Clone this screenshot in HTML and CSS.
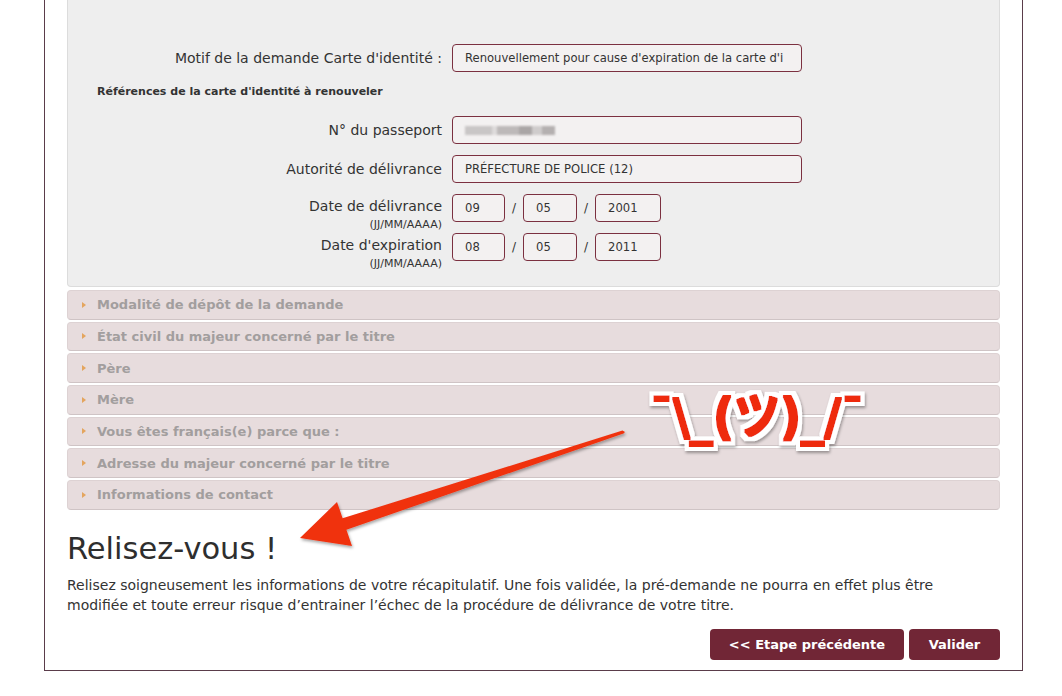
FILE: index.html
```html
<!DOCTYPE html>
<html lang="fr">
<head>
<meta charset="utf-8">
<title>Récapitulatif</title>
<link rel="stylesheet" href="styles.css">
</head>
<body>
<div class="page">
  <div class="panel">
    <div class="field-row">
      <div class="label">Motif de la demande Carte d'identité :</div>
      <div class="input input-wide">Renouvellement pour cause d'expiration de la carte d'i</div>
    </div>
    <div class="subhead">Références de la carte d'identité à renouveler</div>
    <div class="field-row">
      <div class="label">N° du passeport</div>
      <div class="input input-wide"><span class="blur"></span></div>
    </div>
    <div class="field-row">
      <div class="label">Autorité de délivrance</div>
      <div class="input input-wide">PRÉFECTURE DE POLICE (12)</div>
    </div>
    <div class="field-row">
      <div class="label label-date">Date de délivrance<span class="hint">(JJ/MM/AAAA)</span></div>
      <div class="date">
        <div class="input input-dd">09</div><span class="sep">/</span>
        <div class="input input-mm">05</div><span class="sep">/</span>
        <div class="input input-yy">2001</div>
      </div>
    </div>
    <div class="field-row">
      <div class="label label-date">Date d'expiration<span class="hint">(JJ/MM/AAAA)</span></div>
      <div class="date">
        <div class="input input-dd">08</div><span class="sep">/</span>
        <div class="input input-mm">05</div><span class="sep">/</span>
        <div class="input input-yy">2011</div>
      </div>
    </div>
  </div>

  <div class="accordion">
    <div class="acc-item"><span class="caret"></span>Modalité de dépôt de la demande</div>
    <div class="acc-item"><span class="caret"></span>État civil du majeur concerné par le titre</div>
    <div class="acc-item"><span class="caret"></span>Père</div>
    <div class="acc-item"><span class="caret"></span>Mère</div>
    <div class="acc-item"><span class="caret"></span>Vous êtes français(e) parce que :</div>
    <div class="acc-item"><span class="caret"></span>Adresse du majeur concerné par le titre</div>
    <div class="acc-item"><span class="caret"></span>Informations de contact</div>
  </div>

  <h2 class="title">Relisez-vous !</h2>
  <p class="intro">Relisez soigneusement les informations de votre récapitulatif. Une fois validée, la pré-demande ne pourra en effet plus être modifiée et toute erreur risque d’entrainer l’échec de la procédure de délivrance de votre titre.</p>

  <div class="actions">
    <button class="btn btn-prev">&lt;&lt; Etape précédente</button>
    <button class="btn btn-ok">Valider</button>
  </div>
</div>

<svg class="annot" width="1062" height="696" viewBox="0 0 1062 696">
  <defs>
    <filter id="sh" x="-10%" y="-10%" width="130%" height="140%">
      <feDropShadow dx="1" dy="2" stdDeviation="1.5" flood-color="#000" flood-opacity="0.35"/>
    </filter>
    <filter id="sticker" x="-8%" y="-30%" width="120%" height="170%">
      <feMorphology in="SourceAlpha" operator="dilate" radius="5" result="outer"/>
      <feFlood flood-color="#ffffff" result="wfill"/>
      <feComposite in="wfill" in2="outer" operator="in" result="white"/>
      <feGaussianBlur in="outer" stdDeviation="1.6" result="blur"/>
      <feOffset in="blur" dx="1" dy="2" result="offb"/>
      <feFlood flood-color="#000000" flood-opacity="0.35" result="sfill"/>
      <feComposite in="sfill" in2="offb" operator="in" result="shadow"/>
      <feMorphology in="SourceGraphic" operator="dilate" radius="0.8" result="thick"/>
      <feMerge>
        <feMergeNode in="shadow"/>
        <feMergeNode in="white"/>
        <feMergeNode in="thick"/>
      </feMerge>
    </filter>
  </defs>
  <polygon class="arrow" filter="url(#sh)" points="622.5,430.6 342.6,518.3 337,502 300,538 352,546 346.4,529.7 623.5,433.4 625,432"/>
  <text class="shrug" x="650" y="434" textLength="214" lengthAdjust="spacingAndGlyphs" filter="url(#sticker)">¯\_(ツ)_/¯</text>
</svg>
</body>
</html>
```

FILE: styles.css
```css
html, body {
  margin: 0;
  padding: 0;
  background: #ffffff;
}

body {
  position: relative;
  width: 1062px;
  height: 696px;
  overflow: hidden;
  font-family: "DejaVu Sans", "Liberation Sans", sans-serif;
  color: #333333;
}

.page {
  margin-left: 44px;
  width: 979px;
  box-sizing: border-box;
  border: 1px solid #5a3c4a;
  border-top: none;
  padding: 0 22px 10px;
}

.panel {
  background: #eeeeee;
  border: 1px solid #dcdcdc;
  border-top: none;
  border-radius: 0 0 4px 4px;
  padding: 44px 0 25px;
}

.field-row {
  display: flex;
  align-items: flex-start;
  gap: 10px;
  height: 28px;
  margin-bottom: 11px;
}

.field-row:last-child {
  margin-bottom: 0;
}

.label {
  width: 374px;
  flex: none;
  text-align: right;
  font-size: 14px;
  line-height: 28px;
  color: #333;
}

.label-date {
  line-height: 24px;
}

.hint {
  display: block;
  font-size: 11px;
  line-height: 12px;
  margin-top: 1px;
  color: #333;
}

.input {
  box-sizing: border-box;
  height: 28px;
  border: 1px solid #7b3040;
  border-radius: 4px;
  background: #f3f1f1;
  padding: 0 12px;
  font-size: 11.6px;
  line-height: 26px;
  color: #333;
  white-space: nowrap;
  overflow: hidden;
}

.input-wide {
  width: 350px;
}

.blur {
  display: inline-block;
  width: 90px;
  height: 9px;
  vertical-align: middle;
  background: linear-gradient(90deg, #c9c6c6 0 30%, #dedbdb 30% 36%, #bdb9b9 36% 60%, #aaa6a6 60% 75%, #cfcccc 75% 86%, #b4b0b0 86% 100%);
  filter: blur(1px);
}

.subhead {
  font-weight: bold;
  font-size: 11px;
  line-height: 16px;
  padding-left: 29px;
  margin: 12px 0 16px;
  color: #333;
}

.date {
  display: flex;
  align-items: center;
}

.sep {
  width: 18px;
  text-align: center;
  font-size: 12px;
  color: #333;
}

.input-dd { width: 53px; }
.input-mm { width: 54px; }
.input-yy { width: 66px; }

.accordion {
  margin-top: 3px;
  display: flex;
  flex-direction: column;
  gap: 2px;
}

.acc-item {
  box-sizing: border-box;
  height: 29.67px;
  background: #e7dcdd;
  border: 1px solid #ddd2d3;
  border-bottom-color: #cfc4c5;
  border-radius: 4px;
  display: flex;
  align-items: center;
  padding-left: 14px;
  font-weight: bold;
  font-size: 13px;
  color: #a29e9e;
}

.caret {
  width: 0;
  height: 0;
  border-top: 3px solid transparent;
  border-bottom: 3px solid transparent;
  border-left: 4px solid #e4a55e;
  margin-right: 11px;
}

.title {
  margin: 21px 0 0;
  font-weight: normal;
  font-size: 30.5px;
  line-height: 36px;
  color: #2e2e2e;
}

.intro {
  margin: 8px 0 0;
  padding-right: 40px;
  font-size: 14px;
  line-height: 20px;
  color: #333;
}

.actions {
  display: flex;
  justify-content: flex-end;
  gap: 5px;
  margin-top: 14px;
}

.btn {
  height: 31px;
  border: none;
  border-radius: 4px;
  background: #712636;
  color: #ffffff;
  font-family: inherit;
  font-weight: bold;
  font-size: 13px;
  padding: 0;
  cursor: pointer;
}

.btn-prev { width: 194px; }
.btn-ok { width: 91px; }

.annot {
  position: absolute;
  top: 0;
  left: 0;
  pointer-events: none;
}

.arrow {
  fill: #f0300e;
}

.shrug {
  font-family: "DejaVu Sans", "Noto Sans CJK JP", sans-serif;
  font-weight: bold;
  font-size: 50px;
  fill: #ee2b0e;
}
```
